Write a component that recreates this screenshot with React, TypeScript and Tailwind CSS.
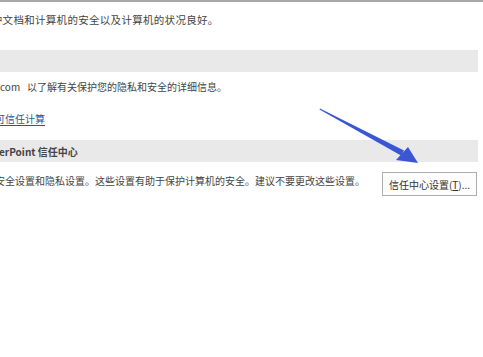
export default function App() {
  const font = { fontFamily: '"Noto Sans CJK SC", "Noto Sans", sans-serif' };
  return (
    <div
      className="w-[483px] h-[357px] bg-white overflow-hidden relative border-t-2 border-[#a8a8a8] text-[10px] text-[#444444]"
      style={font}
    >
      {/* intro line */}
      <div className="h-[48px] pt-[10px] whitespace-nowrap text-[10.5px] tracking-[0.3px]">
        <span className="ml-[-19px] inline-block">保护文档和计算机的安全以及计算机的状况良好。</span>
      </div>

      {/* privacy band */}
      <div className="h-[22px] w-[478px] bg-[#e9e9e9]"></div>
      <div className="h-[30px] pt-[7px] whitespace-nowrap">
        <span>com&nbsp;&nbsp;&nbsp;以了解有关保护您的隐私和安全的详细信息。</span>
      </div>
      <div className="h-[38px] pt-[9px] whitespace-nowrap">
        <span className="ml-[-5px] inline-block text-[#2b5797] underline underline-offset-2">可信任计算</span>
      </div>

      {/* trust center band */}
      <div className="h-[22px] w-[478px] bg-[#e9e9e9] flex items-center whitespace-nowrap font-bold text-[#444444]">
        <span className="ml-[-1px]">erPoint 信任中心</span>
      </div>
      <div className="flex items-start w-[478px] pt-[10px]">
        <span className="ml-[-5px] mt-[1px] whitespace-nowrap">
          安全设置和隐私设置。这些设置有助于保护计算机的安全。建议不要更改这些设置。
        </span>
        <button className="ml-auto mr-[1px] w-[95px] h-[24px] border border-[#adadad] bg-[#fdfdfd] text-[10px] text-[#333333] flex items-center justify-center whitespace-nowrap">
          信任中心设置(<span className="underline">T</span>)...
        </button>
      </div>

      {/* annotation arrow */}
      <svg className="absolute left-0 top-0" width="483" height="357" viewBox="0 0 483 357">
        <polygon points="320,106.5 404,148.5 401,153.5 319.5,107.5" fill="#3a56d4" />
        <polygon points="418,161 396,158 408,145" fill="#3a56d4" />
      </svg>
    </div>
  );
}
